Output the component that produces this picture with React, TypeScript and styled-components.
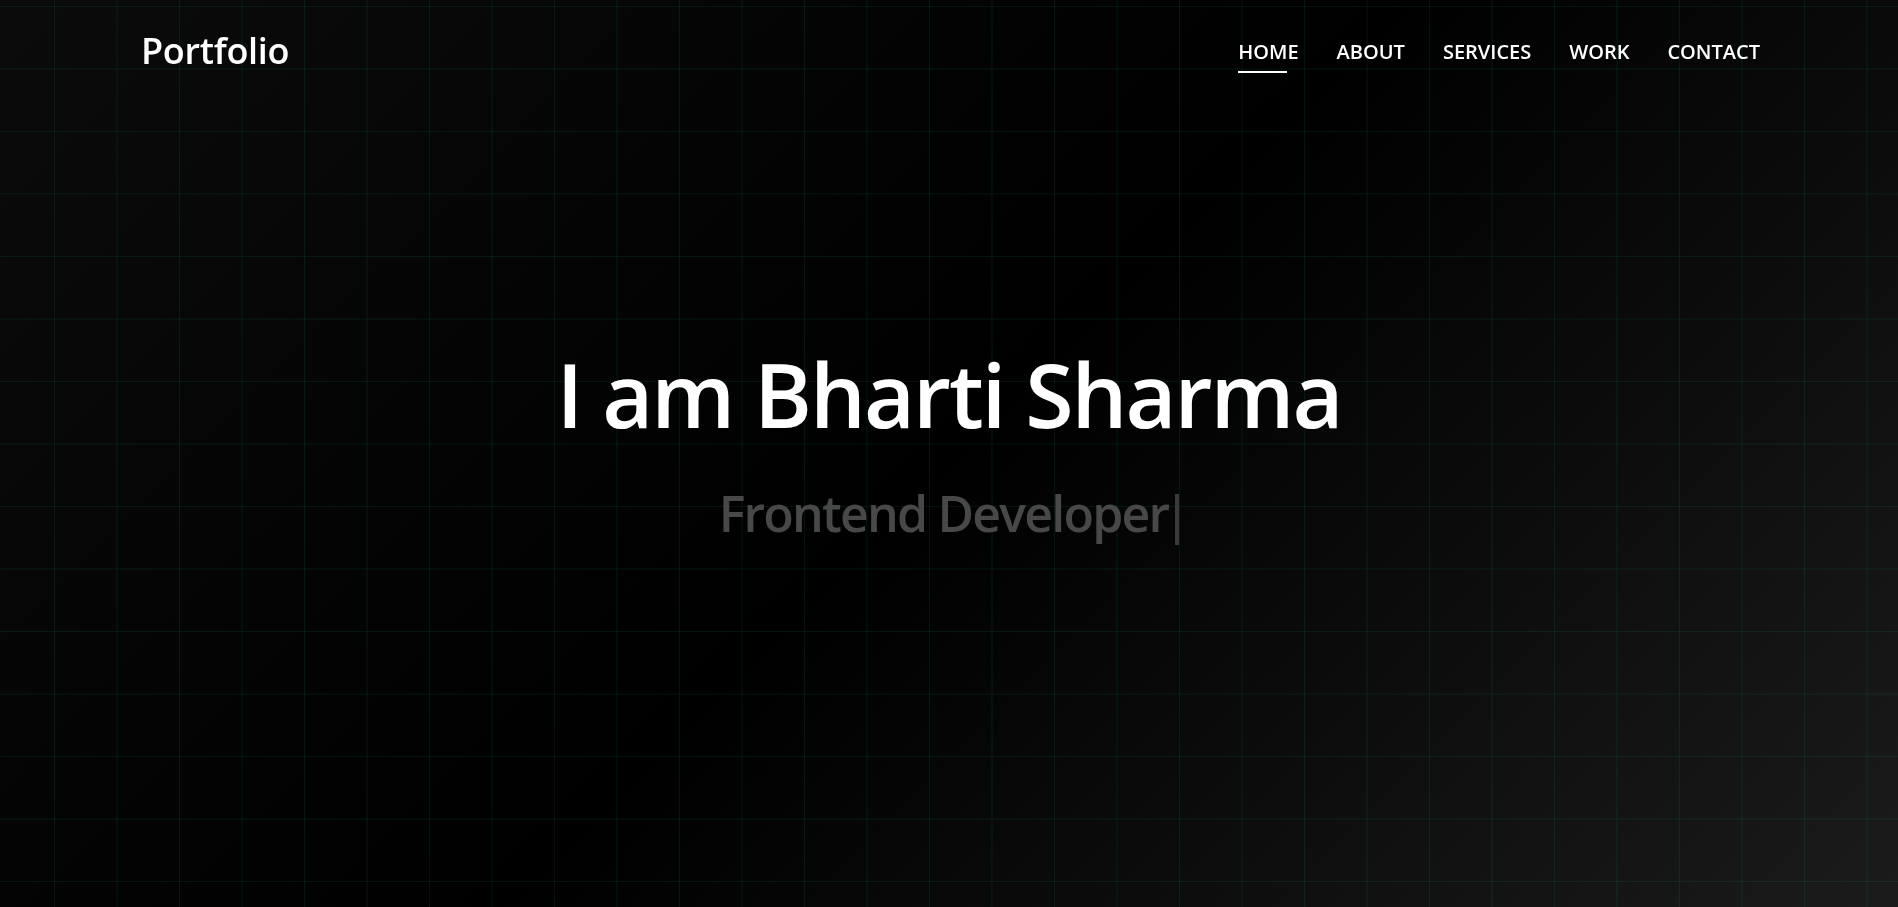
import styled, { createGlobalStyle } from "styled-components";

const GlobalStyle = createGlobalStyle`
  * {
    box-sizing: border-box;
  }

  body {
    margin: 0;
    background: #000;
    font-family: "Open Sans", "Noto Sans", sans-serif;
    color: #fff;
  }
`;

const Page = styled.div`
  min-height: 100vh;
  background-color: #000;
  background-image: linear-gradient(
      to right,
      rgba(0, 255, 160, 0.08) 1px,
      transparent 1px
    ),
    linear-gradient(to bottom, rgba(0, 255, 160, 0.08) 1px, transparent 1px),
    linear-gradient(135deg, #0b0b0b 0%, #000 50%, #1b1b1b 100%);
  background-size: 62.5px 62.5px, 62.5px 62.5px, 100% 100%;
  background-position: 54px 6px, 54px 6px, 0 0;
  display: flex;
  flex-direction: column;
`;

/* fixed bar that sits over the hero */
const Navbar = styled.header`
  position: fixed;
  top: 0;
  left: 0;
  right: 0;
  padding: 33px 138px 0 141px;
  display: flex;
  align-items: flex-start;
  justify-content: space-between;
  z-index: 10;
`;

const Logo = styled.a`
  font-size: 36px;
  font-weight: 600;
  line-height: 1;
  letter-spacing: -0.3px;
  color: #fff;
  text-decoration: none;
`;

const NavList = styled.nav`
  display: flex;
  gap: 38px;
  margin-top: 8.5px;
`;

const NavLink = styled.a<{ $active?: boolean }>`
  position: relative;
  font-size: 20px;
  font-weight: 600;
  line-height: 1;
  color: #fff;
  text-decoration: none;
  text-transform: uppercase;
  padding-bottom: 11.5px;

  &::after {
    content: "";
    position: absolute;
    left: 0;
    bottom: 0;
    height: 2px;
    width: ${({ $active }) => ($active ? "80%" : "0")};
    background: #fff;
  }
`;

const Hero = styled.main`
  flex: 1;
  min-height: 100vh;
  display: flex;
  flex-direction: column;
  align-items: center;
  justify-content: center;
  text-align: center;
  padding-bottom: 20px;
`;

const Title = styled.h1`
  margin: 0;
  font-size: 88px;
  font-weight: 600;
  line-height: 1.2;
  letter-spacing: -2px;
  color: #fff;
`;

const Subtitle = styled.h2`
  margin: 36px 0 0;
  font-size: 50px;
  font-weight: 600;
  line-height: 1.2;
  letter-spacing: -1.8px;
  color: #484848;
  display: flex;
  align-items: flex-start;
`;

const Cursor = styled.span`
  display: inline-block;
  width: 4px;
  height: 51px;
  margin-left: 7px;
  margin-top: 11px;
  background: #3a3a3a;
`;

const links = ["Home", "About", "Services", "Work", "Contact"];

export default function App() {
  return (
    <>
      <GlobalStyle />
      <Page>
        <Navbar>
          <Logo href="#">Portfolio</Logo>
          <NavList>
            {links.map((link, i) => (
              <NavLink key={link} href="#" $active={i === 0}>
                {link}
              </NavLink>
            ))}
          </NavList>
        </Navbar>
        <Hero>
          <Title>I am Bharti Sharma</Title>
          <Subtitle>
            Frontend Developer
            <Cursor />
          </Subtitle>
        </Hero>
      </Page>
    </>
  );
}
